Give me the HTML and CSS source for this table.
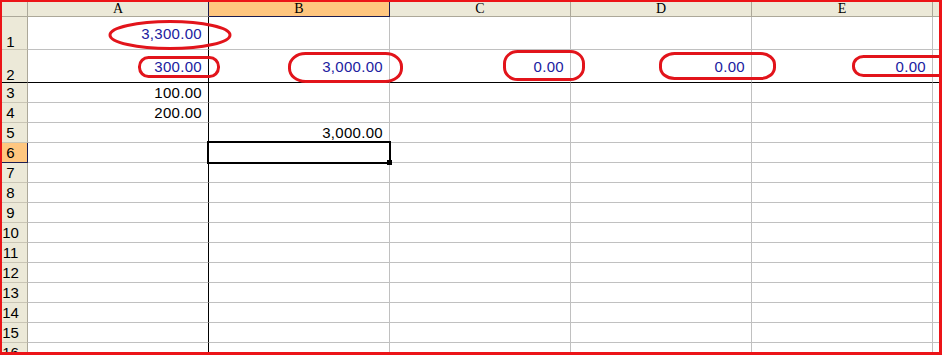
FILE: index.html
```html
<!DOCTYPE html>
<html>
<head>
<meta charset="utf-8">
<link rel="stylesheet" href="styles.css">
</head>
<body>
<div class="frame">
  <div class="sheet">
    <div class="row hdr"><div class="c"></div><div class="c">A</div><div class="c sel">B</div><div class="c">C</div><div class="c">D</div><div class="c">E</div><div class="c"></div></div>
    <div class="row tall"><div class="c rh">1</div><div class="c blue">3,300.00</div><div class="c"></div><div class="c"></div><div class="c"></div><div class="c"></div><div class="c"></div></div>
    <div class="row tall frz"><div class="c rh">2</div><div class="c blue">300.00</div><div class="c blue">3,000.00</div><div class="c blue">0.00</div><div class="c blue">0.00</div><div class="c blue">0.00</div><div class="c"></div></div>
    <div class="row"><div class="c rh">3</div><div class="c">100.00</div><div class="c"></div><div class="c"></div><div class="c"></div><div class="c"></div><div class="c"></div></div>
    <div class="row"><div class="c rh">4</div><div class="c">200.00</div><div class="c"></div><div class="c"></div><div class="c"></div><div class="c"></div><div class="c"></div></div>
    <div class="row"><div class="c rh">5</div><div class="c"></div><div class="c">3,000.00</div><div class="c"></div><div class="c"></div><div class="c"></div><div class="c"></div></div>
    <div class="row"><div class="c rh rsel">6</div><div class="c"></div><div class="c act"></div><div class="c"></div><div class="c"></div><div class="c"></div><div class="c"></div></div>
    <div class="row"><div class="c rh">7</div><div class="c"></div><div class="c"></div><div class="c"></div><div class="c"></div><div class="c"></div><div class="c"></div></div>
    <div class="row"><div class="c rh">8</div><div class="c"></div><div class="c"></div><div class="c"></div><div class="c"></div><div class="c"></div><div class="c"></div></div>
    <div class="row"><div class="c rh">9</div><div class="c"></div><div class="c"></div><div class="c"></div><div class="c"></div><div class="c"></div><div class="c"></div></div>
    <div class="row"><div class="c rh">10</div><div class="c"></div><div class="c"></div><div class="c"></div><div class="c"></div><div class="c"></div><div class="c"></div></div>
    <div class="row"><div class="c rh">11</div><div class="c"></div><div class="c"></div><div class="c"></div><div class="c"></div><div class="c"></div><div class="c"></div></div>
    <div class="row"><div class="c rh">12</div><div class="c"></div><div class="c"></div><div class="c"></div><div class="c"></div><div class="c"></div><div class="c"></div></div>
    <div class="row"><div class="c rh">13</div><div class="c"></div><div class="c"></div><div class="c"></div><div class="c"></div><div class="c"></div><div class="c"></div></div>
    <div class="row"><div class="c rh">14</div><div class="c"></div><div class="c"></div><div class="c"></div><div class="c"></div><div class="c"></div><div class="c"></div></div>
    <div class="row"><div class="c rh">15</div><div class="c"></div><div class="c"></div><div class="c"></div><div class="c"></div><div class="c"></div><div class="c"></div></div>
    <div class="row"><div class="c rh">16</div><div class="c"></div><div class="c"></div><div class="c"></div><div class="c"></div><div class="c"></div><div class="c"></div></div>
  </div>
  <svg class="marks" width="942" height="355" viewBox="0 0 942 355">
    <ellipse cx="170" cy="35" rx="60" ry="13.5"/>
    <rect x="139.5" y="57.5" width="79" height="19" rx="9" ry="9"/>
    <rect x="289.5" y="53.5" width="112" height="28" rx="16" ry="13"/>
    <rect x="504.5" y="51.5" width="79" height="28" rx="13" ry="12"/>
    <rect x="660.5" y="53.5" width="114" height="25" rx="14" ry="11"/>
    <rect x="853.5" y="56.5" width="100" height="19" rx="10" ry="9"/>
  </svg>
</div>
</body>
</html>
```

FILE: styles.css
```css
body {
  margin: 0;
  background: #fff;
}

.frame {
  position: relative;
  width: 942px;
  height: 355px;
  box-sizing: border-box;
  border-style: solid;
  border-color: #ec1418;
  border-width: 2px 3px 3px 2px;
  overflow: hidden;
  background: #fff;
}

.sheet {
  height: 350px;
  overflow: hidden;
}

.row {
  display: grid;
  grid-template-columns: 26px repeat(5, 181px) 6px;
  height: 20px;
}

.c {
  box-sizing: border-box;
  border-right: 1px solid #c0c0c0;
  border-bottom: 1px solid #c0c0c0;
  display: flex;
  align-items: center;
  justify-content: flex-end;
  padding-right: 6px;
  font: 15px/1 "Liberation Sans", Arial, sans-serif;
  letter-spacing: 0.3px;
  color: #000;
  overflow: hidden;
  white-space: nowrap;
}

.c:nth-child(2) {
  border-right-color: #000;
}

.c:last-child {
  border-right: none;
  padding: 0;
}

.blue {
  color: #2020a0;
}

.rh {
  background: #ece9d8;
  border-right-color: #aca899;
  border-bottom-color: #c9c5b5;
  justify-content: center;
  padding: 0 8px 0 0;
  letter-spacing: 0;
}

.rsel {
  background: #ffc67f;
  border-right-color: #1c1c50;
  border-bottom-color: #1c1c50;
}

.tall {
  height: 33px;
}

.tall .rh {
  align-items: flex-end;
}

.frz .c {
  border-bottom-color: #000;
}

.hdr {
  height: 15px;
}

.hdr .c {
  background: #ece9d8;
  border-right-color: #aca899;
  border-bottom-color: #aca899;
  justify-content: center;
  padding: 0;
  font: 14px/1 "Liberation Serif", "Times New Roman", serif;
  letter-spacing: 0;
}

.hdr .c:nth-child(2) {
  border-right-color: #1c1c50;
}

.hdr .c:last-child {
  border-right: none;
}

.hdr .sel {
  background: #ffc67f;
  border-right-color: #1c1c50;
  border-bottom-color: #1c1c50;
}

.act {
  position: relative;
  overflow: visible;
}

.act::after {
  content: "";
  position: absolute;
  left: -2px;
  top: -2px;
  right: -2px;
  bottom: -2px;
  border: 2px solid #000;
}

.act::before {
  content: "";
  position: absolute;
  right: -3px;
  bottom: -3px;
  width: 5px;
  height: 5px;
  background: #000;
  z-index: 1;
}

.marks {
  position: absolute;
  left: -2px;
  top: -2px;
  fill: none;
  stroke: #e2141b;
  stroke-width: 3;
}
```
